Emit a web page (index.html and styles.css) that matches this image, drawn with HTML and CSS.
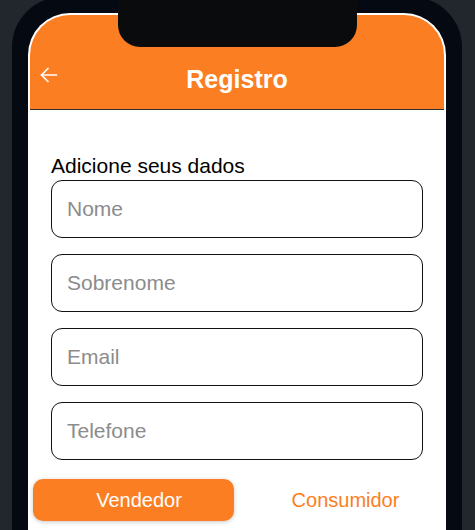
FILE: index.html
```html
<!DOCTYPE html>
<html lang="pt">
<head>
<meta charset="utf-8">
<title>Registro</title>
<link rel="stylesheet" href="styles.css">
</head>
<body>
<div class="phone">
  <div class="notch"></div>
  <div class="screen">
    <header class="appbar">
      <button class="back" aria-label="Voltar">
        <svg width="18" height="16" viewBox="0 0 18 16" fill="none" stroke="#fff" stroke-width="1.7" stroke-linecap="round" stroke-linejoin="round">
          <path d="M16.5 8H1.5"/>
          <path d="M8 1.5L1.5 8L8 14.5"/>
        </svg>
      </button>
      <h1 class="title">Registro</h1>
      <span></span>
    </header>
    <main class="form">
      <p class="label">Adicione seus dados</p>
      <div class="fields">
        <input class="field" type="text" placeholder="Nome">
        <input class="field" type="text" placeholder="Sobrenome">
        <input class="field" type="email" placeholder="Email">
        <input class="field" type="tel" placeholder="Telefone">
      </div>
    </main>
    <div class="roles">
      <button class="role active">Vendedor</button>
      <button class="role">Consumidor</button>
    </div>
  </div>
</div>
</body>
</html>
```

FILE: styles.css
```css
html, body {
  margin: 0;
  padding: 0;
  height: 100%;
  overflow: hidden;
  background: #22262d;
  font-family: "Liberation Sans", Arial, sans-serif;
}

.phone {
  position: relative;
  margin: -3px 13px 0 12px;
  padding: 16px 16px 0;
  height: 533px;
  background: #050a12;
  border-radius: 50px 50px 0 0;
  box-sizing: border-box;
  overflow: hidden;
}

.notch {
  position: absolute;
  top: 0;
  left: 106px;
  width: 239px;
  height: 50px;
  background: #0a0b0d;
  border-radius: 0 0 22px 22px;
  z-index: 2;
}

.screen {
  height: 100%;
  background: #fff;
  border-radius: 42px 42px 0 0;
  padding: 2px;
  box-sizing: border-box;
  overflow: hidden;
}

.appbar {
  display: grid;
  grid-template-columns: 1fr auto 1fr;
  align-items: center;
  padding: 49px 10px 15px;
  height: 30px;
  box-sizing: content-box;
  background: #fc7e22;
  border-radius: 40px 40px 0 0;
  border-bottom: 1px solid #2f2f2f;
}

.back {
  justify-self: start;
  display: flex;
  align-items: center;
  padding: 0;
  margin: -9px 0 0 0;
  border: 0;
  background: none;
  cursor: pointer;
}

.title {
  margin: 0;
  font-size: 25px;
  line-height: 30px;
  font-weight: 700;
  color: #fff;
}

.form {
  padding: 44px 21px 0;
}

.label {
  margin: 0 0 2px;
  font-size: 21px;
  line-height: 24px;
  color: #000;
}

.fields {
  display: flex;
  flex-direction: column;
  gap: 16px;
}

.field {
  display: block;
  width: 100%;
  height: 58px;
  box-sizing: border-box;
  padding: 0 15px;
  border: 1px solid #111;
  border-radius: 11px;
  font-family: inherit;
  font-size: 21px;
  color: #222;
  background: #fff;
  outline: none;
}

.field::placeholder {
  color: #8c8c8c;
}

.roles {
  display: grid;
  grid-template-columns: 201px 201px;
  column-gap: 11px;
  margin-top: 19px;
  padding-left: 3px;
}

.role {
  height: 42px;
  padding: 0;
  border: 0;
  border-radius: 10px;
  background: none;
  font-family: inherit;
  font-size: 20px;
  color: #fc7e22;
  cursor: pointer;
}

.role.active {
  padding-left: 11px;
  background: #fc7e22;
  color: #fff;
  box-shadow: 0 1px 4px rgba(0, 0, 0, 0.22);
}
```
